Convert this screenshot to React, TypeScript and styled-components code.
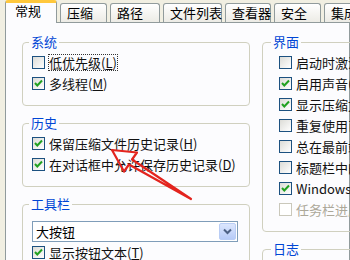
import React from 'react';
import styled, { createGlobalStyle } from 'styled-components';

const GlobalStyle = createGlobalStyle`
  body {
    margin: 0;
    font-family: "Noto Sans CJK SC", "Noto Sans", sans-serif;
    font-size: 13px;
    color: #000;
  }
`;

const Window = styled.div`
  position: relative;
  width: 350px;
  height: 260px;
  overflow: hidden;
  background: #f1efe2;
`;

const TabStrip = styled.div`
  display: flex;
  align-items: flex-end;
  gap: 3px;
  height: 22px;
  padding-left: 5px;
`;

const Tab = styled.div<{ $active?: boolean; $width: number }>`
  position: relative;
  z-index: ${p => (p.$active ? 2 : 1)};
  flex: none;
  box-sizing: border-box;
  width: ${p => p.$width}px;
  height: ${p => (p.$active ? 23 : 19)}px;
  margin-bottom: ${p => (p.$active ? -1 : 0)}px;
  padding-left: ${p => (p.$active ? 9 : 6)}px;
  border: 1px solid #919b9c;
  border-bottom: none;
  border-top: ${p => (p.$active ? '3px solid #ffc83c' : '1px solid #919b9c')};
  border-radius: 3px 3px 0 0;
  background: ${p => (p.$active ? '#fcfcfe' : 'linear-gradient(#ffffff, #ecebe5)')};
  font-size: 13px;
  line-height: ${p => (p.$active ? 16 : 17)}px;
  white-space: nowrap;
`;

const Panel = styled.div`
  display: flex;
  gap: 12px;
  height: 300px;
  margin-left: 5px;
  padding: 11px 0 0 16px;
  border: 1px solid #919b9c;
  background: #fcfcfe;
`;

const Column = styled.div<{ $width: number }>`
  display: flex;
  flex-direction: column;
  gap: 9px;
  flex: none;
  width: ${p => p.$width}px;
`;

const Group = styled.fieldset<{ $inset: number }>`
  margin: 0;
  padding: 2px ${p => p.$inset}px 11px;
  border: 1px solid #d0d0bf;
  border-radius: 4px;
  min-width: 0;
`;

const Legend = styled.legend<{ $shift: number }>`
  margin-left: ${p => p.$shift}px;
  padding: 0 2px;
  color: #0046d5;
  font-size: 13px;
  line-height: 16px;
`;

const Row = styled.div<{ $disabled?: boolean }>`
  display: flex;
  align-items: center;
  gap: 4px;
  height: 21px;
  white-space: nowrap;
  color: ${p => (p.$disabled ? '#aca899' : '#111')};
`;

const Box = styled.span<{ $disabled?: boolean }>`
  display: inline-flex;
  flex: none;
  box-sizing: border-box;
  width: 13px;
  height: 13px;
  border: 1px solid ${p => (p.$disabled ? '#cac8bb' : '#1c5180')};
  background: ${p => (p.$disabled ? '#fff' : 'linear-gradient(135deg, #dcdcd7, #ffffff)')};
`;

const Label = styled.span<{ $focus?: boolean }>`
  line-height: 15px;
  outline: ${p => (p.$focus ? '1px dotted #333' : 'none')};
`;

const Combo = styled.div`
  display: flex;
  align-items: center;
  box-sizing: border-box;
  width: 206px;
  height: 21px;
  margin-top: 7px;
  padding: 1px 1px 1px 3px;
  border: 1px solid #7f9db9;
  background: #fff;
`;

const ComboText = styled.span`
  flex: 1;
  line-height: 17px;
`;

const ComboButton = styled.span`
  display: flex;
  align-items: center;
  justify-content: center;
  width: 17px;
  height: 17px;
  box-sizing: border-box;
  border: 1px solid #b9cdf5;
  border-radius: 2px;
  background: linear-gradient(#dce6fd, #b6cbf8);
`;

const Overlay = styled.svg`
  position: absolute;
  left: 0;
  top: 0;
  pointer-events: none;
`;

const CheckBox: React.FC<{ checked?: boolean; disabled?: boolean }> = ({ checked, disabled }) => (
  <Box $disabled={disabled}>
    {checked && (
      <svg width="11" height="11" viewBox="0 0 11 11">
        <path d="M2 5 L4.3 7.5 L9 2.5" fill="none" stroke="#21a121" strokeWidth="2" />
      </svg>
    )}
  </Box>
);

const Check: React.FC<{ checked?: boolean; disabled?: boolean; focus?: boolean; children: React.ReactNode }> = ({
  checked,
  disabled,
  focus,
  children,
}) => (
  <Row $disabled={disabled}>
    <CheckBox checked={checked} disabled={disabled} />
    <Label $focus={focus}>{children}</Label>
  </Row>
);

const tabs = [
  { name: '压缩', width: 47 },
  { name: '路径', width: 50 },
  { name: '文件列表', width: 59 },
  { name: '查看器', width: 46 },
  { name: '安全', width: 47 },
  { name: '集成', width: 50 },
];

export default function App() {
  return (
    <Window>
      <GlobalStyle />
      <TabStrip>
        <Tab $active $width={52}>常规</Tab>
        {tabs.map(t => (
          <Tab key={t.name} $width={t.width}>{t.name}</Tab>
        ))}
      </TabStrip>
      <Panel>
        <Column $width={228}>
          <Group $inset={9}>
            <Legend $shift={-3}>系统</Legend>
            <Check focus>低优先级(<u>L</u>)</Check>
            <Check checked>多线程(<u>M</u>)</Check>
          </Group>
          <Group $inset={9}>
            <Legend $shift={-3}>历史</Legend>
            <Check checked>保留压缩文件历史记录(<u>H</u>)</Check>
            <Check checked>在对话框中允许保存历史记录(<u>D</u>)</Check>
          </Group>
          <Group $inset={9}>
            <Legend $shift={-3}>工具栏</Legend>
            <Combo>
              <ComboText>大按钮</ComboText>
              <ComboButton>
                <svg width="9" height="7" viewBox="0 0 9 7">
                  <path d="M1 1.5 L4.5 5 L8 1.5" fill="none" stroke="#4d6185" strokeWidth="2" />
                </svg>
              </ComboButton>
            </Combo>
            <Check checked>显示按钮文本(<u>T</u>)</Check>
          </Group>
        </Column>
        <Column $width={200}>
          <Group $inset={16}>
            <Legend $shift={-8}>界面</Legend>
            <Check>启动时激活向导(<u>W</u>)</Check>
            <Check checked>启用声音(<u>S</u>)</Check>
            <Check checked>显示压缩文件优先(<u>F</u>)</Check>
            <Check>重复使用已有窗口(<u>R</u>)</Check>
            <Check>总在最前端(<u>O</u>)</Check>
            <Check>标题栏中的完整路径(<u>P</u>)</Check>
            <Check checked>Windows 进度条(<u>B</u>)</Check>
            <Check disabled>任务栏进度</Check>
          </Group>
          <Group $inset={16}>
            <Legend $shift={-8}>日志</Legend>
            <Check>记录错误到文件(<u>E</u>)</Check>
          </Group>
        </Column>
      </Panel>
      <Overlay width="350" height="260" viewBox="0 0 350 260">
        <polygon
          points="112,150 137,152.5 132,159.5 191,199 129,164.5 124,171.5"
          fill="none"
          stroke="#e3241e"
          strokeWidth="2.2"
          strokeLinejoin="round"
        />
      </Overlay>
    </Window>
  );
}
